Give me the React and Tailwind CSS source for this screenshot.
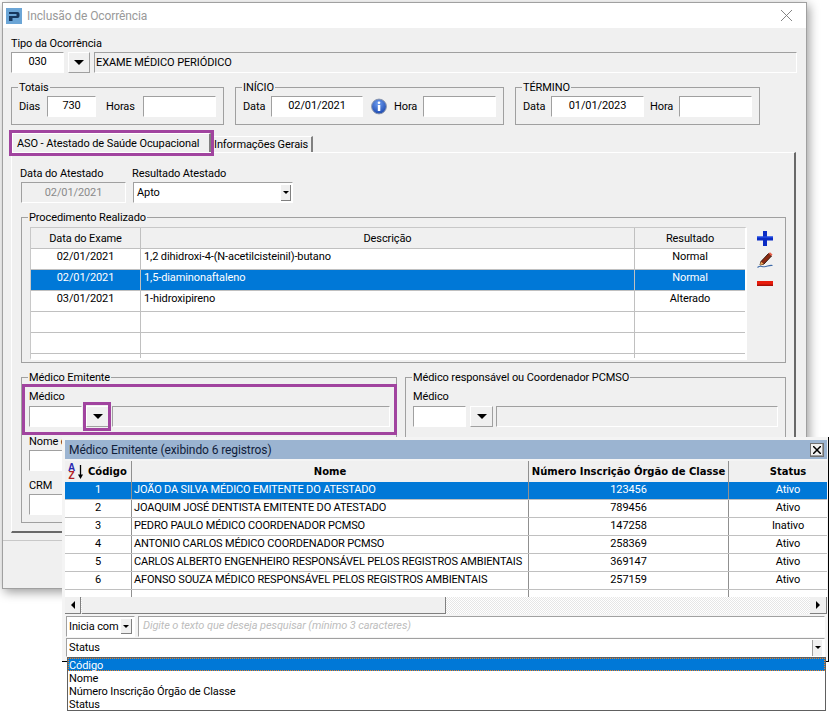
import React from "react";

const sunken = "border-t border-l border-t-[#a0a0a0] border-l-[#a0a0a0] border-r border-b border-r-white border-b-white";

function Input({ className = "", children }) {
  return (
    <div className={`flex h-[21px] shrink-0 items-center justify-center bg-white ${sunken} ${className}`}>
      {children}
    </div>
  );
}

function ReadOnly({ className = "", children }) {
  return <div className={`flex h-[21px] items-center px-[1px] pt-[2px] ${sunken} ${className}`}>{children}</div>;
}

function Label({ className = "", children }) {
  return <span className={`pt-[2px] ${className}`}>{children}</span>;
}

function Arrow() {
  return <span className="h-0 w-0 border-x-[3px] border-t-[3px] border-x-transparent border-t-black" />;
}

function DropButton({ className = "" }) {
  return (
    <div className={`flex h-[21px] shrink-0 items-center justify-center border-t border-l border-t-white border-l-white border-r border-b border-r-[#a0a0a0] border-b-[#a0a0a0] ${className}`}>
      <span className="h-0 w-0 border-x-[5px] border-t-[5px] border-x-transparent border-t-black" />
    </div>
  );
}

function Group({ title, className = "", children }) {
  return (
    <fieldset className={`min-w-0 border border-[#a0a0a0] pl-[7px] ${className}`}>
      <legend className="-ml-px h-[14px] px-[1px] leading-[16px] whitespace-nowrap">{title}</legend>
      {children}
    </fieldset>
  );
}

function Logo() {
  return (
    <svg width="16" height="16" viewBox="0 0 16 16" className="shrink-0">
      <rect width="16" height="16" fill="#6ba5d6" />
      <path d="M3 4h8.500a2 2 0 0 1 2 2v2a2 2 0 0 1-2 2H6.500V13H3V8h7.500V6H3z" fill="#17375e" />
    </svg>
  );
}

function InfoIcon() {
  return (
    <svg width="16" height="17" viewBox="0 0 16 17" className="shrink-0">
      <defs>
        <radialGradient id="info" cx="45%" cy="30%" r="70%">
          <stop offset="0" stopColor="#6f9ef0" />
          <stop offset="1" stopColor="#1c49b0" />
        </radialGradient>
      </defs>
      <circle cx="8" cy="8.500" r="7.400" fill="url(#info)" stroke="#8c97ad" />
      <circle cx="8" cy="4.800" r="1.300" fill="#fff" />
      <rect x="6.800" y="7" width="2.500" height="6" fill="#fff" />
    </svg>
  );
}

function PlusIcon() {
  return (
    <svg width="16" height="15" viewBox="0 0 16 15">
      <path d="M6 0h4v5.500h6v4h-6V15H6V9.500H0v-4h6z" fill="#0a2bc4" />
      <path d="M6 5.500h4v1H6zM0 5.500h16v1H0z" fill="#2f5cf0" />
    </svg>
  );
}

function EditIcon() {
  return (
    <svg width="16" height="17" viewBox="0 0 16 17">
      <path d="M4 9.500 L11.500 1.500 L14.500 4 L7 12 L3 13z" fill="#8a2a12" stroke="#2a1006" strokeWidth="0.900" />
      <path d="M11.500 1.500 L13 0.300 L15.500 2.500 L14.300 4z" fill="#e8604a" />
      <path d="M3 13 L4 9.800 L6.800 12z" fill="#f2b060" />
      <path d="M0.500 15.500c3-2.500 4-.5 7-.7 3-.2 4.500-2 8-1.300" fill="none" stroke="#3f6aa8" strokeWidth="1.100" />
    </svg>
  );
}

function MinusIcon() {
  return (
    <svg width="16" height="5" viewBox="0 0 16 5">
      <rect width="16" height="5" fill="#e81c0c" />
      <rect y="3.500" width="16" height="1.500" fill="#a81008" />
    </svg>
  );
}

function SortIcon() {
  return (
    <div className="flex shrink-0 items-center gap-[2px]">
      <div className="flex w-[7px] flex-col font-['Liberation_Sans',sans-serif] text-[10px] leading-[8px] font-bold">
        <span className="text-[#2a2ab0]">A</span>
        <span className="text-[#b02020]">Z</span>
      </div>
      <svg width="7" height="16" viewBox="0 0 7 16">
        <path d="M3.500 1v11" stroke="#000" strokeWidth="1.300" />
        <path d="M1 10.500h5L3.500 15z" fill="#000" />
      </svg>
    </div>
  );
}

const exames = [
  ["02/01/2021", "1,2 dihidroxi-4-(N-acetilcisteinil)-butano", "Normal"],
  ["02/01/2021", "1,5-diaminonaftaleno", "Normal"],
  ["03/01/2021", "1-hidroxipireno", "Alterado"],
  ["", "", ""],
  ["", "", ""],
];

const medicos = [
  ["1", "JOÃO DA SILVA MÉDICO EMITENTE DO ATESTADO", "123456", "Ativo"],
  ["2", "JOAQUIM JOSÉ DENTISTA EMITENTE DO ATESTADO", "789456", "Ativo"],
  ["3", "PEDRO PAULO MÉDICO COORDENADOR PCMSO", "147258", "Inativo"],
  ["4", "ANTONIO CARLOS MÉDICO COORDENADOR PCMSO", "258369", "Ativo"],
  ["5", "CARLOS ALBERTO ENGENHEIRO RESPONSÁVEL PELOS REGISTROS AMBIENTAIS", "369147", "Ativo"],
  ["6", "AFONSO SOUZA MÉDICO RESPONSÁVEL PELOS REGISTROS AMBIENTAIS", "257159", "Ativo"],
];

function ProcedimentoTable() {
  return (
    <div className="ml-px h-[133px] w-[717px] overflow-hidden border-t border-l border-t-[#c8c8c8] border-l-[#c8c8c8] border-r-2 border-b-2 border-r-white border-b-white bg-white">
      <div className="flex h-[21px] overflow-hidden border-b border-[#c0c0c0] bg-[#f0f0f0] text-center leading-[22px]">
        <div className="w-[110px] border-r border-[#c0c0c0]">Data do Exame</div>
        <div className="w-[494px] border-r border-[#c0c0c0]">Descrição</div>
        <div className="w-[110px]">Resultado</div>
      </div>
      {exames.map((row, i) => (
        <div key={i} className={`flex h-[21px] border-b border-[#c0c0c0] leading-[16px] ${i === 1 ? "bg-[#0078d7] text-white" : ""}`}>
          <div className="w-[110px] border-r border-[#c0c0c0] text-center">{row[0]}</div>
          <div className="w-[494px] border-r border-[#c0c0c0] pl-[3px]">{row[1]}</div>
          <div className="w-[110px] text-center">{row[2]}</div>
        </div>
      ))}
      <div className="flex h-[5px]">
        <div className="w-[110px] border-r border-[#c0c0c0]" />
        <div className="w-[494px] border-r border-[#c0c0c0]" />
      </div>
    </div>
  );
}

function MedicoPopup() {
  return (
    <div className="absolute top-[437px] left-[62px] flex h-[225px] w-[767px] flex-col border-r border-b border-black bg-[#f4f4f4] pt-[3px] pr-[1px] pl-[3px]">
      <div className="flex h-[19px] shrink-0 items-center justify-between bg-[#9bb4d1] pr-[3px] pl-[4px] text-[#10203a]">
        <span className="pt-[2px] text-[12px] leading-[17px]">Médico Emitente (exibindo 6 registros)</span>
        <div className="flex h-[14px] w-[14px] items-center justify-center border border-[#707070] bg-[#f0f0f0] shadow-[inset_-1px_-1px_0_#a0a0a0]">
          <svg width="8" height="8" viewBox="0 0 8 8">
            <path d="M0 0l8 8M8 0L0 8" stroke="#000" strokeWidth="1.500" />
          </svg>
        </div>
      </div>
      <div className="mt-[2px] h-[136px] shrink-0 overflow-hidden bg-white">
        <div className="flex h-[21px] items-center bg-[#f0f0f0] text-center font-['DejaVu_Sans',sans-serif] text-[10px] font-bold tracking-normal whitespace-nowrap">
          <div className="flex h-full w-[67px] shrink-0 items-center gap-[4px] border-r border-[#909090] pl-[3px]">
            <SortIcon />
            <span>Código</span>
          </div>
          <div className="flex h-full w-[397px] shrink-0 items-center justify-center border-r border-[#909090]">Nome</div>
          <div className="flex h-full w-[200px] shrink-0 items-center justify-center border-r border-[#909090]">Número Inscrição Órgão de Classe</div>
          <div className="w-[118px] shrink-0">Status</div>
        </div>
        {medicos.map((m, i) => (
          <div key={m[0]} className={`flex h-[18px] border-b border-[#c0c0c0] leading-[15px] ${i === 0 ? "bg-[#0078d7] text-white" : ""}`}>
            <div className="w-[67px] shrink-0 border-r border-[#909090] text-center">{m[0]}</div>
            <div className="w-[397px] shrink-0 border-r border-[#909090] pl-[2px] tracking-[-0.17px] whitespace-nowrap">{m[1]}</div>
            <div className="w-[200px] shrink-0 border-r border-[#909090] text-center">{m[2]}</div>
            <div className="w-[118px] shrink-0 text-center">{m[3]}</div>
          </div>
        ))}
        <div className="flex h-[7px]">
          <div className="w-[67px] shrink-0 border-r border-[#909090]" />
          <div className="w-[397px] shrink-0 border-r border-[#909090]" />
          <div className="w-[200px] shrink-0 border-r border-[#909090]" />
        </div>
      </div>
      <div className="flex h-[17px] shrink-0 bg-[repeating-conic-gradient(#ffffff_0_25%,#e6e6e6_0_50%)] bg-[length:2px_2px]">
        <div className="flex w-[16px] items-center justify-center border-r border-b border-r-[#808080] border-b-[#808080] bg-[#f0f0f0]">
          <span className="h-0 w-0 border-y-[4px] border-r-[4px] border-y-transparent border-r-black" />
        </div>
        <div className="ml-px w-[364px] border-r border-b border-r-[#808080] border-b-[#808080] bg-[#f0f0f0]" />
        <div className="ml-auto flex w-[17px] items-center justify-center border-r border-b border-r-[#808080] border-b-[#808080] bg-[#f0f0f0]">
          <span className="h-0 w-0 border-y-[4px] border-l-[4px] border-y-transparent border-l-black" />
        </div>
      </div>
      <div className="mt-[2px] flex h-[21px] shrink-0 gap-[3px] pl-[1px]">
        <div className={`flex w-[69px] items-center justify-between bg-white pr-[2px] pl-[2px] ${sunken}`}>
          <Label className="whitespace-nowrap">Inicia com</Label>
          <span className="flex h-[15px] w-[11px] items-center justify-center border-r border-b border-r-[#808080] border-b-[#808080] bg-[#f0f0f0]">
            <Arrow />
          </span>
        </div>
        <div className={`flex w-[687px] items-center bg-white pl-[4px] text-[#bdbdbd] italic ${sunken}`}>
          Digite o texto que deseja pesquisar (mínimo 3 caracteres)
        </div>
      </div>
      <div className={`mt-px ml-px flex h-[19px] w-[759px] items-center justify-between bg-white pr-[2px] pl-[2px] ${sunken}`}>
        <Label>Status</Label>
        <span className="flex h-[16px] w-[10px] items-center justify-center border-l border-[#a0a0a0] bg-[#f0f0f0]">
          <Arrow />
        </span>
      </div>
    </div>
  );
}

function CampoList() {
  return (
    <div className="absolute top-[657px] left-[67px] w-[759px] border border-[#606060] bg-white leading-[15px]">
      <div className="h-[13px] border border-dotted border-[#f08020] bg-[#0078d7] leading-[13px] text-white">Código</div>
      <div className="h-[13px] pl-px">Nome</div>
      <div className="h-[13px] pl-px">Número Inscrição Órgão de Classe</div>
      <div className="h-[13px] pl-px">Status</div>
    </div>
  );
}

export default function App() {
  return (
    <div className="relative h-[713px] w-[832px] overflow-hidden bg-white font-['Roboto',sans-serif] text-[11px] tracking-[-0.1px] text-black">
      <div className="mt-[2px] ml-[2px] flex h-[587px] w-[805px] flex-col border border-[#a0a0a0] bg-[#f0f0f0] shadow-[2px_3px_10px_rgba(0,0,0,0.4)]">
        <div className="flex h-[25px] shrink-0 items-center justify-between bg-white pr-[14px] pl-[3px]">
          <div className="flex items-center gap-[5px]">
            <Logo />
            <span className="text-[12px] text-[#999999]">Inclusão de Ocorrência</span>
          </div>
          <svg width="11" height="11" viewBox="0 0 11 11">
            <path d="M0 0l11 11M11 0L0 11" stroke="#777" strokeWidth="0.900" />
          </svg>
        </div>

        <div className="flex flex-1 flex-col pt-[8px] pr-[9px] pl-[8px]">
          <div className="h-[14px] leading-[16px]">Tipo da Ocorrência</div>
          <div className="mt-[2px] flex">
            <Input className="w-[53px]">030</Input>
            <DropButton className="ml-[4px] w-[22px]" />
            <ReadOnly className="ml-[4px] flex-1 pl-[1px]">EXAME MÉDICO PERIÓDICO</ReadOnly>
          </div>

          <div className="mt-[7px] flex h-[45px]">
            <Group title="Totais" className="w-[213px]">
              <div className="mt-[2px] flex items-center">
                <Label className="w-[28px]">Dias</Label>
                <Input className="w-[49px]">730</Input>
                <Label className="ml-[10px] w-[37px]">Horas</Label>
                <Input className="w-[73px]" />
              </div>
            </Group>
            <Group title="INÍCIO" className="ml-[11px] w-[269px]">
              <div className="mt-[2px] flex items-center">
                <Label className="w-[28px]">Data</Label>
                <Input className="w-[92px]">02/01/2021</Input>
                <span className="ml-[8px]"><InfoIcon /></span>
                <Label className="ml-[7px] w-[29px]">Hora</Label>
                <Input className="w-[73px]" />
              </div>
            </Group>
            <Group title="TÉRMINO" className="ml-[11px] w-[245px]">
              <div className="mt-[2px] flex items-center">
                <Label className="w-[28px]">Data</Label>
                <Input className="w-[93px]">01/01/2023</Input>
                <Label className="ml-[6px] w-[29px]">Hora</Label>
                <Input className="w-[73px]" />
              </div>
            </Group>
          </div>

          <div className="mt-[8px] flex h-[20px] items-end pl-px">
            <div className="flex h-[20px] w-[199px] items-center border-t border-l border-t-white border-l-white border-r-2 border-r-[#808080] pt-[2px] pl-[4px] whitespace-nowrap">
              ASO - Atestado de Saúde Ocupacional
            </div>
            <div className="ml-[2px] flex h-[17px] w-[100px] items-center border-t border-l border-t-white border-l-white border-r-2 border-r-[#808080] whitespace-nowrap">
              Informações Gerais
            </div>
          </div>

          <div className="-mt-px flex h-[381px] w-[785px] flex-col border-t border-l border-t-white border-l-white border-r-2 border-b-2 border-r-[#696969] border-b-[#696969] pt-[13px] pl-[9px]">
            <div className="-ml-px flex h-[14px] leading-[16px]">
              <span className="w-[112px]">Data do Atestado</span>
              <span>Resultado Atestado</span>
            </div>
            <div className="mt-[2px] flex">
              <ReadOnly className="w-[105px] justify-center text-[#8a8a8a]">02/01/2021</ReadOnly>
              <div className={`ml-[7px] flex h-[21px] w-[160px] items-center justify-between bg-white pr-[1px] pl-[3px] ${sunken}`}>
                <Label>Apto</Label>
                <span className="flex h-[16px] w-[10px] items-center justify-center border-r border-b border-r-[#808080] border-b-[#808080] bg-[#f0f0f0]">
                  <Arrow />
                </span>
              </div>
            </div>

            <Group title="Procedimento Realizado" className="mt-[7px] h-[153px] w-[765px]">
              <div className="mt-[3px] flex">
                <ProcedimentoTable />
                <div className="ml-[10px] flex flex-col items-center pt-[4px]">
                  <PlusIcon />
                  <div className="mt-[6px]"><EditIcon /></div>
                  <div className="mt-[12px]"><MinusIcon /></div>
                </div>
              </div>
            </Group>

            <div className="mt-[7px] flex h-[153px]">
              <Group title="Médico Emitente" className="w-[376px]">
                <div className="mt-[5px] h-[14px] leading-[16px]">Médico</div>
                <div className="mt-[3px] flex">
                  <Input className="w-[53px]" />
                  <DropButton className="ml-[4px] w-[23px]" />
                  <ReadOnly className="ml-[3px] w-[278px]" />
                </div>
                <div className="mt-[7px] -mb-[2px] h-[16px] w-[33px] overflow-hidden leading-[16px] whitespace-nowrap">Nome do Médico</div>
                <Input className="mt-[2px] w-[340px]" />
                <div className="mt-[7px] h-[14px] leading-[16px]">CRM</div>
                <Input className="mt-[2px] w-[120px]" />
              </Group>
              <Group title="Médico responsável ou Coordenador PCMSO" className="ml-[8px] w-[381px]">
                <div className="mt-[5px] h-[14px] leading-[16px]">Médico</div>
                <div className="mt-[3px] flex">
                  <Input className="w-[53px]" />
                  <DropButton className="ml-[4px] w-[23px]" />
                  <ReadOnly className="ml-[3px] w-[282px]" />
                </div>
              </Group>
            </div>
          </div>

          <div className="mt-[7px] -mr-[9px] -ml-[8px] flex-1 border-t border-[#c8c8c8]" />
        </div>
      </div>

      <div className="pointer-events-none absolute top-[130px] left-[9px] h-[26px] w-[205px] border-[3px] border-[#a1449f]" />
      <div className="pointer-events-none absolute top-[384px] left-[22px] h-[51px] w-[375px] border-[3px] border-[#a1449f]" />
      <div className="pointer-events-none absolute top-[402px] left-[83px] h-[29px] w-[28px] border-[3px] border-[#a1449f]" />

      <MedicoPopup />
      <CampoList />
    </div>
  );
}
